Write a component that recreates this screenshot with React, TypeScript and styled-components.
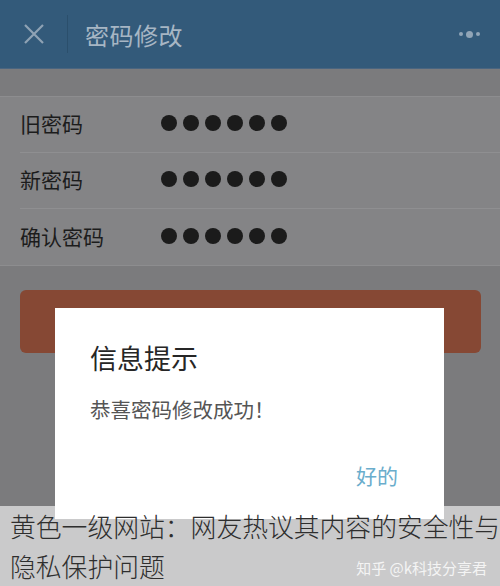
import React from "react";
import styled, { createGlobalStyle } from "styled-components";

const Global = createGlobalStyle`
  html, body { margin: 0; padding: 0; }
  body { font-family: "Noto Sans CJK SC", "Noto Sans", sans-serif; }
`;

const Screen = styled.div`
  position: relative;
  width: 500px;
  height: 586px;
  overflow: hidden;
  background: #7b7b7d;
  display: flex;
  flex-direction: column;
`;

const TopBar = styled.div`
  height: 69px;
  background: #335a7a;
  display: flex;
  align-items: center;
  padding: 0 20px 0 22px;
  box-sizing: border-box;
  border-bottom: 1px solid #4a6580;
`;

const Close = styled.div`
  width: 24px;
  height: 24px;
  display: flex;
  align-items: center;
  justify-content: center;
`;

const Divider = styled.div`
  width: 1px;
  height: 38px;
  background: #2b4f6c;
  margin: 0 17px 0 21px;
`;

const Title = styled.div`
  flex: 1;
  font-size: 24px;
  color: #a7b6c4;
  letter-spacing: 0.5px;
`;

const More = styled.div`
  display: flex;
  align-items: center;
  gap: 3px;
`;

const Dot = styled.span<{ $size: number }>`
  width: ${(p) => p.$size}px;
  height: ${(p) => p.$size}px;
  border-radius: 50%;
  background: #91a5b7;
`;

const Form = styled.div`
  margin-top: 27px;
  background: #848486;
  border-top: 1px solid #8d8d8f;
  border-bottom: 1px solid #8d8d8f;
  display: flex;
  flex-direction: column;
`;

const Row = styled.div<{ $last?: boolean }>`
  height: 56px;
  margin-left: 20px;
  display: flex;
  align-items: center;
  padding-bottom: 3px;
  border-bottom: ${(p) => (p.$last ? "none" : "1px solid #8f8f91")};
  box-sizing: border-box;
`;

const Label = styled.div`
  width: 141px;
  font-size: 21px;
  color: #1c1c1c;
`;

const Dots = styled.div`
  display: flex;
  gap: 6px;
`;

const PwDot = styled.span`
  width: 16px;
  height: 16px;
  border-radius: 50%;
  background: #1b1b1b;
`;

const Submit = styled.div`
  margin: 24px 19px 0 20px;
  height: 63px;
  border-radius: 6px;
  background: #864834;
  display: flex;
  justify-content: center;
  align-items: center;
  color: #d8c2ba;
  font-size: 21px;
`;

const Dialog = styled.div`
  position: absolute;
  left: 55px;
  top: 308px;
  width: 389px;
  height: 211px;
  background: #ffffff;
  box-sizing: border-box;
  padding: 30px 46px 0 35px;
  display: flex;
  flex-direction: column;
`;

const DialogTitle = styled.div`
  font-size: 27px;
  line-height: 40px;
  color: #262626;
`;

const DialogText = styled.div`
  margin-top: 16px;
  font-size: 20.5px;
  line-height: 30px;
  color: #555555;
`;

const DialogAction = styled.div`
  margin-top: 36px;
  align-self: flex-end;
  font-size: 21px;
  line-height: 30px;
  color: #6aadcc;
`;

const Caption = styled.div`
  position: absolute;
  left: 0;
  right: 0;
  bottom: 0;
  height: 80px;
  background: rgba(255, 255, 255, 0.6);
  padding: 0 0 0 10px;
  box-sizing: border-box;
  display: flex;
  flex-direction: column;
`;

const CaptionLine = styled.div`
  font-size: 25.8px;
  line-height: 40px;
  color: #2e2e2e;
  white-space: nowrap;
  font-weight: 300;
`;

const CaptionBottom = styled.div`
  display: flex;
  align-items: center;
  justify-content: space-between;
  padding-right: 13px;
`;

const Credit = styled.div`
  font-size: 15px;
  color: #f4f4f4;
  margin-top: 2px;
`;

export default function App() {
  const rows = ["旧密码", "新密码", "确认密码"];
  return (
    <>
      <Global />
      <Screen>
        <TopBar>
          <Close>
            <svg width="22" height="22" viewBox="0 0 22 22">
              <path d="M2 2 L20 20 M20 2 L2 20" stroke="#8fa2b4" strokeWidth="2.2" fill="none" />
            </svg>
          </Close>
          <Divider />
          <Title>密码修改</Title>
          <More>
            <Dot $size={4} />
            <Dot $size={7} />
            <Dot $size={4} />
          </More>
        </TopBar>
        <Form>
          {rows.map((r, i) => (
            <Row key={r} $last={i === rows.length - 1}>
              <Label>{r}</Label>
              <Dots>
                {Array.from({ length: 6 }).map((_, j) => (
                  <PwDot key={j} />
                ))}
              </Dots>
            </Row>
          ))}
        </Form>
        <Submit>确认提交</Submit>
        <Dialog>
          <DialogTitle>信息提示</DialogTitle>
          <DialogText>恭喜密码修改成功！</DialogText>
          <DialogAction>好的</DialogAction>
        </Dialog>
        <Caption>
          <CaptionLine>黄色一级网站：网友热议其内容的安全性与</CaptionLine>
          <CaptionBottom>
            <CaptionLine>隐私保护问题</CaptionLine>
            <Credit>知乎 @k科技分享君</Credit>
          </CaptionBottom>
        </Caption>
      </Screen>
    </>
  );
}
